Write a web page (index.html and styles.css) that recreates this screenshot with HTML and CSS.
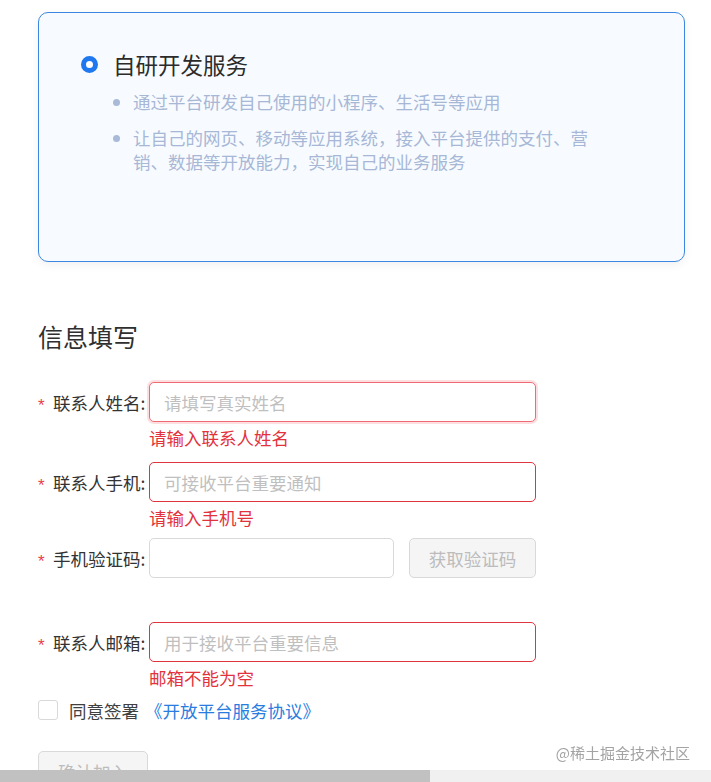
FILE: index.html
```html
<!DOCTYPE html>
<html lang="zh-CN">
<head>
<meta charset="utf-8">
<title>信息填写</title>
<link rel="stylesheet" href="styles.css">
</head>
<body>
<div class="page">
  <div class="card">
    <div class="card-title"><span class="radio"></span><span>自研开发服务</span></div>
    <ul class="points">
      <li>通过平台研发自己使用的小程序、生活号等应用</li>
      <li>让自己的网页、移动等应用系统，接入平台提供的支付、营销、数据等开放能力，实现自己的业务服务</li>
    </ul>
  </div>

  <h2 class="section-title">信息填写</h2>

  <form class="form">
    <div class="field field-name">
      <label class="label"><span class="req">*</span>联系人姓名:</label>
      <div class="control">
        <input class="input input-error input-focus" type="text" placeholder="请填写真实姓名">
        <div class="err">请输入联系人姓名</div>
      </div>
    </div>

    <div class="field field-phone">
      <label class="label"><span class="req">*</span>联系人手机:</label>
      <div class="control">
        <input class="input input-error" type="text" placeholder="可接收平台重要通知">
        <div class="err">请输入手机号</div>
      </div>
    </div>

    <div class="field field-code">
      <label class="label"><span class="req">*</span>手机验证码:</label>
      <div class="control control-code">
        <input class="input input-code" type="text">
        <button class="btn btn-code" type="button">获取验证码</button>
      </div>
    </div>

    <div class="field field-mail">
      <label class="label"><span class="req">*</span>联系人邮箱:</label>
      <div class="control">
        <input class="input input-error" type="text" placeholder="用于接收平台重要信息">
        <div class="err">邮箱不能为空</div>
      </div>
    </div>

    <div class="agree">
      <span class="checkbox"></span>
      <span class="agree-text">同意签署</span>
      <a class="agree-link" href="#">《开放平台服务协议》</a>
    </div>

    <button class="btn btn-submit" type="button">确认加入</button>
  </form>
</div>

<div class="watermark">@稀土掘金技术社区</div>
<div class="hscroll"><div class="hscroll-thumb"></div></div>
</body>
</html>
```

FILE: styles.css
```css
* { box-sizing: border-box; }

html, body {
  margin: 0;
  padding: 0;
  background: #ffffff;
  overflow: hidden;
}

body {
  font-family: "Noto Sans CJK SC", "Noto Sans", sans-serif;
  font-size: 17.5px;
  color: #333333;
}

.page {
  padding: 12px 26px 0 38px;
  width: 711px;
}

.card {
  width: 647px;
  height: 250px;
  border: 1px solid #3d87e0;
  border-radius: 10px;
  background: #f7fbff;
  box-shadow: 0 3px 10px rgba(0, 0, 0, 0.06);
  padding: 36px 20px 0 42px;
}

.card-title {
  display: flex;
  align-items: center;
  gap: 15px;
  font-size: 22.5px;
  line-height: 30px;
  color: #2b2b2b;
  margin-bottom: 11px;
}

.radio {
  width: 17px;
  height: 17px;
  border-radius: 50%;
  border: 5px solid #1f78f0;
  background: #ffffff;
  flex: none;
}

.points {
  list-style: none;
  margin: 0;
  padding: 0 0 0 32px;
  width: 510px;
}

.points li {
  position: relative;
  padding-left: 20px;
  line-height: 24px;
  color: #a7b7d6;
  margin-bottom: 12px;
}

.points li::before {
  content: "";
  position: absolute;
  left: 0;
  top: 9px;
  width: 7px;
  height: 7px;
  border-radius: 50%;
  background: #a9b9d8;
}

.section-title {
  margin: 57px 0 29px 0;
  font-size: 25px;
  font-weight: normal;
  line-height: 34px;
  color: #2f2f2f;
}

.form {
  display: flex;
  flex-direction: column;
  align-items: flex-start;
}

.field {
  display: flex;
  align-items: flex-start;
}

.field-name { margin-bottom: 12px; }
.field-phone { margin-bottom: 8px; }
.field-code { margin-bottom: 44px; }
.field-mail { margin-bottom: 8px; }

.label {
  width: 111px;
  flex: none;
  display: flex;
  align-items: center;
  height: 40px;
  color: #333333;
  white-space: nowrap;
}

.req {
  width: 15px;
  flex: none;
  color: #e8404a;
  font-family: "Liberation Sans", sans-serif;
  font-size: 17px;
  line-height: 17px;
  padding-top: 7px;
}

.control {
  width: 387px;
}

.control-code {
  display: flex;
  gap: 15px;
}

.input {
  display: block;
  width: 387px;
  height: 40px;
  border: 1px solid #d9d9d9;
  border-radius: 5px;
  background: #ffffff;
  padding: 0 14px;
  font-family: "Noto Sans CJK SC", "Noto Sans", sans-serif;
  font-size: 17.5px;
  color: #333333;
  outline: none;
}

.input::placeholder {
  color: #bfbfbf;
}

.input-error {
  border-color: #e0343f;
}

.input-focus {
  border-color: #ef6b74;
  box-shadow: 0 0 0 2px rgba(245, 80, 90, 0.18);
}

.input-code {
  width: 245px;
}

.err {
  margin-top: 4px;
  line-height: 24px;
  color: #e3323c;
}

.btn {
  height: 40px;
  border: 1px solid #d9d9d9;
  border-radius: 5px;
  background: #f5f5f5;
  color: #bcbcbc;
  font-family: "Noto Sans CJK SC", "Noto Sans", sans-serif;
  font-size: 17.5px;
  padding: 0;
}

.btn-code {
  width: 127px;
}

.agree {
  display: flex;
  align-items: center;
  height: 24px;
  margin-bottom: 29px;
}

.checkbox {
  width: 20px;
  height: 20px;
  border: 1px solid #d9d9d9;
  border-radius: 3px;
  background: #ffffff;
  flex: none;
}

.agree-text {
  margin-left: 11px;
  color: #404040;
}

.agree-link {
  margin-left: 6px;
  color: #2a7de0;
  text-decoration: none;
}

.btn-submit {
  width: 110px;
}

.watermark {
  position: fixed;
  right: 21px;
  bottom: 19px;
  font-size: 15px;
  line-height: 20px;
  color: #a3a3a3;
}

.hscroll {
  position: fixed;
  left: 0;
  right: 0;
  bottom: 0;
  height: 12px;
  background: #f0f0f0;
}

.hscroll-thumb {
  width: 430px;
  height: 12px;
  background: #c1c1c1;
}
```
